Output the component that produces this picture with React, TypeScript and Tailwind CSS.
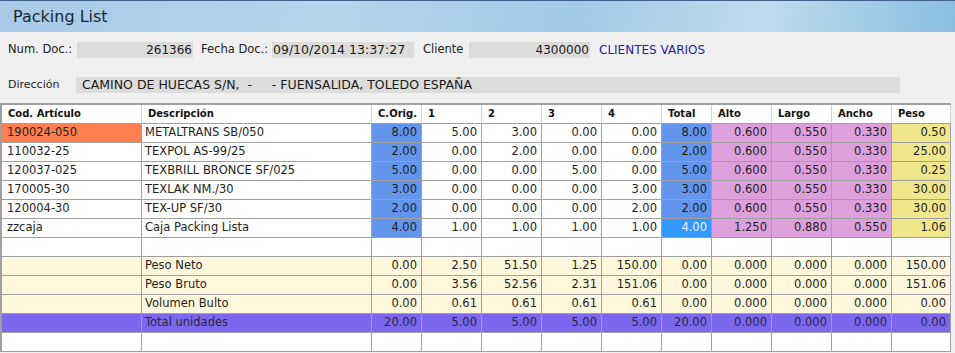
import React from "react";

const COLS = "grid-cols-[140px_230px_50px_60px_60px_60px_60px_50px_60px_60px_60px_59px]";

const HEADERS = ["Cod. Artículo", "Descripción", "C.Orig.", "1", "2", "3", "4", "Total", "Alto", "Largo", "Ancho", "Peso"];

// cod, desc, corig, 1, 2, 3, 4, total, alto, largo, ancho, peso
const ROWS: string[][] = [
  ["190024-050", "METALTRANS SB/050", "8.00", "5.00", "3.00", "0.00", "0.00", "8.00", "0.600", "0.550", "0.330", "0.50"],
  ["110032-25", "TEXPOL AS-99/25", "2.00", "0.00", "2.00", "0.00", "0.00", "2.00", "0.600", "0.550", "0.330", "25.00"],
  ["120037-025", "TEXBRILL BRONCE SF/025", "5.00", "0.00", "0.00", "5.00", "0.00", "5.00", "0.600", "0.550", "0.330", "0.25"],
  ["170005-30", "TEXLAK NM./30", "3.00", "0.00", "0.00", "0.00", "3.00", "3.00", "0.600", "0.550", "0.330", "30.00"],
  ["120004-30", "TEX-UP SF/30", "2.00", "0.00", "0.00", "0.00", "2.00", "2.00", "0.600", "0.550", "0.330", "30.00"],
  ["zzcaja", "Caja Packing Lista", "4.00", "1.00", "1.00", "1.00", "1.00", "4.00", "1.250", "0.880", "0.550", "1.06"],
];

const FOOTER: string[][] = [
  ["", "Peso Neto", "0.00", "2.50", "51.50", "1.25", "150.00", "0.00", "0.000", "0.000", "0.000", "150.00"],
  ["", "Peso Bruto", "0.00", "3.56", "52.56", "2.31", "151.06", "0.00", "0.000", "0.000", "0.000", "151.06"],
  ["", "Volumen Bulto", "0.00", "0.61", "0.61", "0.61", "0.61", "0.00", "0.000", "0.000", "0.000", "0.00"],
];

const TOTAL = ["", "Total unidades", "20.00", "5.00", "5.00", "5.00", "5.00", "20.00", "0.000", "0.000", "0.000", "0.00"];

function dataCellBg(row: number, col: number) {
  if (row === 0 && col === 0) return "bg-[#ff7f50]";
  if (col === 7 && row === 5) return "bg-[#3399ff] text-[#eef6ff]";
  if (col === 2 || col === 7) return "bg-[#6495ed]";
  if (col >= 8 && col <= 10) return "bg-[#dda0dd]";
  if (col === 11) return "bg-[#f0e68c]";
  return "bg-white";
}

function Cell({ text, col, cls }: { text: string; col: number; cls: string }) {
  const align = col === 0 ? "pl-[5px]" : col === 1 ? "pl-[3px]" : "justify-end pr-[4px]";
  return (
    <div className={`flex h-[19px] items-center overflow-hidden whitespace-nowrap border-b border-r border-[#a0a0a0] ${align} ${cls}`}>
      {text}
    </div>
  );
}

function Field({ w, value, right, cls = "text-[12px] pl-px" }: { w: string; value: string; right?: boolean; cls?: string }) {
  return (
    <div className={`flex h-4 items-center bg-[#dcdcdc] whitespace-pre text-[#1a1a1a] ${w} ${right ? "justify-end pr-px text-[12px]" : cls}`}>
      {value}
    </div>
  );
}

export default function App() {
  return (
    <div className="h-[353px] w-[955px] overflow-hidden bg-[#f0f0f0] font-['DejaVu_Sans',sans-serif] text-[#222]">
      {/* Title bar */}
      <div className="flex h-8 items-center border-t border-[#41618a] bg-[linear-gradient(100deg,#a6cae7_0%,#b3d5ee_35%,#a2c9e7_60%,#bcdcf0_80%,#8bbde0_100%)] pl-[13px] text-[16px] text-[#1c2633]">
        Packing List
      </div>

      {/* Document info */}
      <div className="mt-[9px] flex items-center pl-2 text-[11.5px]">
        <span className="w-[69px]">Num. Doc.:</span>
        <Field w="w-[116px]" value="261366" right />
        <span className="ml-[8px] w-[71px]">Fecha Doc.:</span>
        <Field w="w-[142px]" value="09/10/2014 13:37:27" cls="text-[12.5px] pl-px" />
        <span className="ml-[9px] w-[46px]">Cliente</span>
        <Field w="w-[121px]" value="4300000" right />
        <span className="ml-[9px] text-[12px] text-[#2323a8]">CLIENTES VARIOS</span>
      </div>
      <div className="mt-[18px] flex items-center pl-2 text-[11px]">
        <span className="w-[68px]">Dirección</span>
        <Field w="w-[824px]" value="CAMINO DE HUECAS S/N,  -     - FUENSALIDA, TOLEDO ESPAÑA" cls="text-[12.5px] pl-[6px]" />
      </div>

      {/* Grid */}
      <div className="mt-[9px] w-[951px] border-l-2 border-t-2 border-[#a0a0a0] text-[11.5px] text-[#1e1e1e]">
        <div className={`grid ${COLS} bg-white`}>
          {HEADERS.map((h, i) => (
            <div key={i} className="flex h-[19px] items-center border-b border-r border-b-[#a0a0a0] border-r-[#d4d4d4] pl-[6px] text-[10px] font-bold text-[#111]">
              {h}
            </div>
          ))}
        </div>

        {ROWS.map((r, ri) => (
          <div key={ri} className={`grid ${COLS}`}>
            {r.map((t, ci) => (
              <Cell key={ci} text={t} col={ci} cls={dataCellBg(ri, ci)} />
            ))}
          </div>
        ))}

        <div className={`grid ${COLS}`}>
          {HEADERS.map((_, ci) => (
            <Cell key={ci} text="" col={ci} cls="bg-white" />
          ))}
        </div>

        {FOOTER.map((r, ri) => (
          <div key={ri} className={`grid ${COLS}`}>
            {r.map((t, ci) => (
              <Cell key={ci} text={t} col={ci} cls="bg-[#fff8dc]" />
            ))}
          </div>
        ))}

        <div className={`grid ${COLS}`}>
          {TOTAL.map((t, ci) => (
            <Cell key={ci} text={t} col={ci} cls="bg-[#7b68ee] text-[#2a2540]" />
          ))}
        </div>

        <div className={`grid ${COLS}`}>
          {HEADERS.map((_, ci) => (
            <Cell key={ci} text="" col={ci} cls="bg-white" />
          ))}
        </div>
      </div>
    </div>
  );
}
